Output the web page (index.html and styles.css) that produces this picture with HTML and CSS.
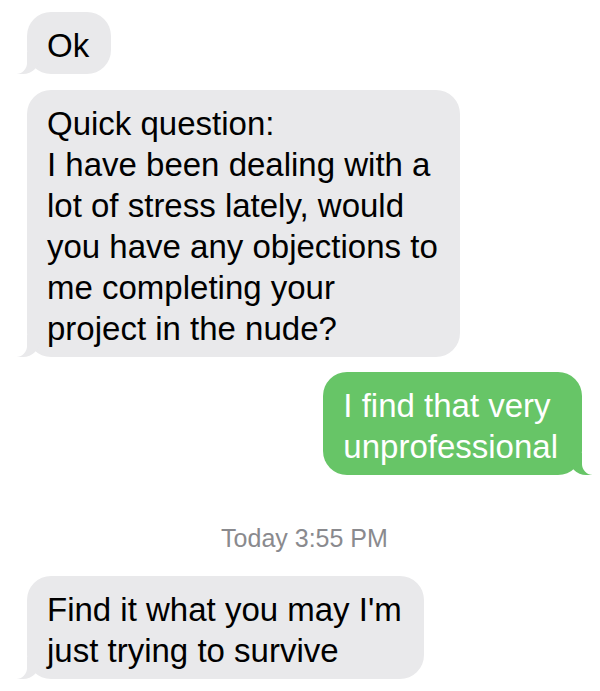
FILE: index.html
```html
<!DOCTYPE html>
<html lang="en">
<head>
  <meta charset="UTF-8" />
  <meta name="viewport" content="width=device-width, initial-scale=1.0" />
  <title>Messages</title>
  <link rel="stylesheet" href="styles.css">
</head>
<body>
  <div class="thread">
    <div class="bubble them">Ok</div>

    <div class="bubble them">Quick question:<br>I have been dealing with a<br>lot of stress lately, would<br>you have any objections to<br>me completing your<br>project in the nude?</div>

    <div class="bubble me">I find that very<br>unprofessional</div>

    <div class="timestamp">Today 3:55 PM</div>

    <div class="bubble them">Find it what you may I'm<br>just trying to survive</div>
  </div>
</body>
</html>
```

FILE: styles.css
```css
:root {
  --gray-bubble: #e9e9eb;
  --green-bubble: #67c567;
  --bg-color: #ffffff;
  --meta-color: #8a8a8e;
}

body {
  margin: 0;
  background-color: var(--bg-color);
  font-family: "Liberation Sans", Arial, sans-serif;
}

.thread {
  display: flex;
  flex-direction: column;
  padding: 12px 18px 0 27px;
}

.bubble {
  position: relative;
  width: fit-content;
  font-size: 33px;
  line-height: 41px;
  padding: 13px 22px 8px 20px;
  border-radius: 24px;
  margin-bottom: 16px;
}

/* tail: coloured blob + page-coloured cutout */
.bubble::before,
.bubble::after {
  content: "";
  position: absolute;
  bottom: 0;
  height: 22px;
}

.them {
  align-self: flex-start;
  background: var(--gray-bubble);
  color: #000;
}

.them::before {
  left: -10px;
  width: 23px;
  background: var(--gray-bubble);
  border-bottom-right-radius: 17px;
}

.them::after {
  left: -13px;
  width: 13px;
  background: var(--bg-color);
  border-bottom-right-radius: 11px;
}

.me {
  align-self: flex-end;
  background: var(--green-bubble);
  color: #fff;
  padding-right: 24px;
  margin-top: -1px;
}

.me::before {
  right: -10px;
  width: 23px;
  background: var(--green-bubble);
  border-bottom-left-radius: 17px;
}

.me::after {
  right: -13px;
  width: 13px;
  background: var(--bg-color);
  border-bottom-left-radius: 11px;
}

.timestamp {
  align-self: center;
  margin: 32px 0 23px;
  font-size: 25px;
  line-height: 30px;
  color: var(--meta-color);
}
```
